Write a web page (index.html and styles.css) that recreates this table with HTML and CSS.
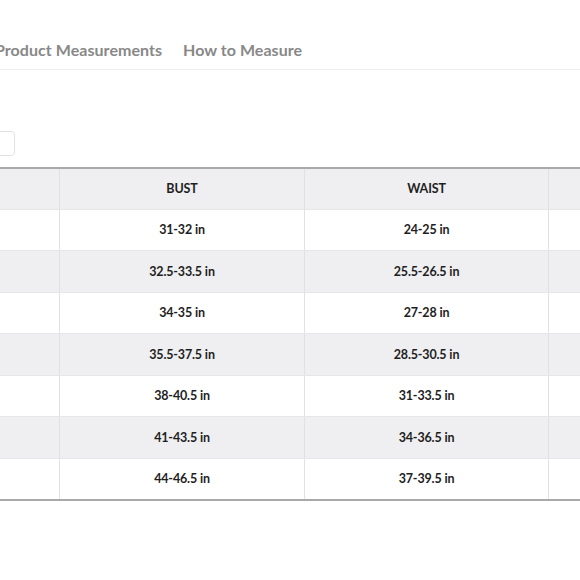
FILE: index.html
```html
<!DOCTYPE html>
<html>
<head>
<meta charset="utf-8">
<link rel="stylesheet" href="styles.css">
</head>
<body>
<div class="page">
  <nav class="tabs">
    <span class="tab">Product Measurements</span>
    <span class="tab">How to Measure</span>
  </nav>
  <div class="toolbar"><span class="unit-btn"></span></div>
  <div class="table-wrap">
    <table class="sizes">
      <colgroup>
        <col class="c1"><col class="c2"><col class="c3"><col class="c4">
      </colgroup>
      <thead>
        <tr><th></th><th>BUST</th><th>WAIST</th><th></th></tr>
      </thead>
      <tbody>
        <tr><td></td><td>31-32 in</td><td>24-25 in</td><td></td></tr>
        <tr><td></td><td>32.5-33.5 in</td><td>25.5-26.5 in</td><td></td></tr>
        <tr><td></td><td>34-35 in</td><td>27-28 in</td><td></td></tr>
        <tr><td></td><td>35.5-37.5 in</td><td>28.5-30.5 in</td><td></td></tr>
        <tr><td></td><td>38-40.5 in</td><td>31-33.5 in</td><td></td></tr>
        <tr><td></td><td>41-43.5 in</td><td>34-36.5 in</td><td></td></tr>
        <tr><td></td><td>44-46.5 in</td><td>37-39.5 in</td><td></td></tr>
      </tbody>
    </table>
  </div>
</div>
</body>
</html>
```

FILE: styles.css
```css
html, body {
  margin: 0;
  padding: 0;
  background: #fff;
}
body {
  width: 580px;
  height: 580px;
  overflow: hidden;
  font-family: "Lato", "Liberation Sans", sans-serif;
  color: #222;
}
.page {
  width: 580px;
  overflow: hidden;
}
.tabs {
  display: flex;
  gap: 21px;
  height: 29px;
  padding-top: 40px;
  margin-left: -5px;
  border-bottom: 1px solid #ececec;
}
.tab {
  font-size: 16px;
  line-height: 20px;
  font-weight: 700;
  color: #888;
  letter-spacing: 0.05px;
  white-space: nowrap;
}
.toolbar {
  height: 25px;
  margin-top: 61px;
  display: flex;
}
.unit-btn {
  display: block;
  width: 40px;
  height: 23px;
  margin-left: -27px;
  border: 1px solid #e2e2e2;
  border-radius: 4px;
}
.table-wrap {
  margin-top: 11px;
  margin-left: -186px;
  width: 1100px;
}
.sizes {
  border-collapse: collapse;
  table-layout: fixed;
  width: 980px;
  border-top: 2px solid #a9a9a9;
  border-bottom: 2px solid #a9a9a9;
}
.c1 { width: 245px; }
.c2 { width: 245px; }
.c3 { width: 244px; }
.c4 { width: 246px; }
.sizes th,
.sizes td {
  height: 41.5px;
  padding: 0;
  text-align: center;
  vertical-align: middle;
  font-size: 12.5px;
  font-weight: 700;
  letter-spacing: -0.15px;
  color: #1e1e1e;
  border-left: 1px solid #e1e1e3;
  border-right: 1px solid #e1e1e3;
  border-bottom: 1px solid #e6e6e8;
  box-sizing: border-box;
}
.sizes th {
  background: #efeff1;
  height: 41px;
}
.sizes tbody tr:nth-child(even) td {
  background: #efeff1;
}
.sizes tbody tr:last-child td {
  border-bottom: none;
}
```
